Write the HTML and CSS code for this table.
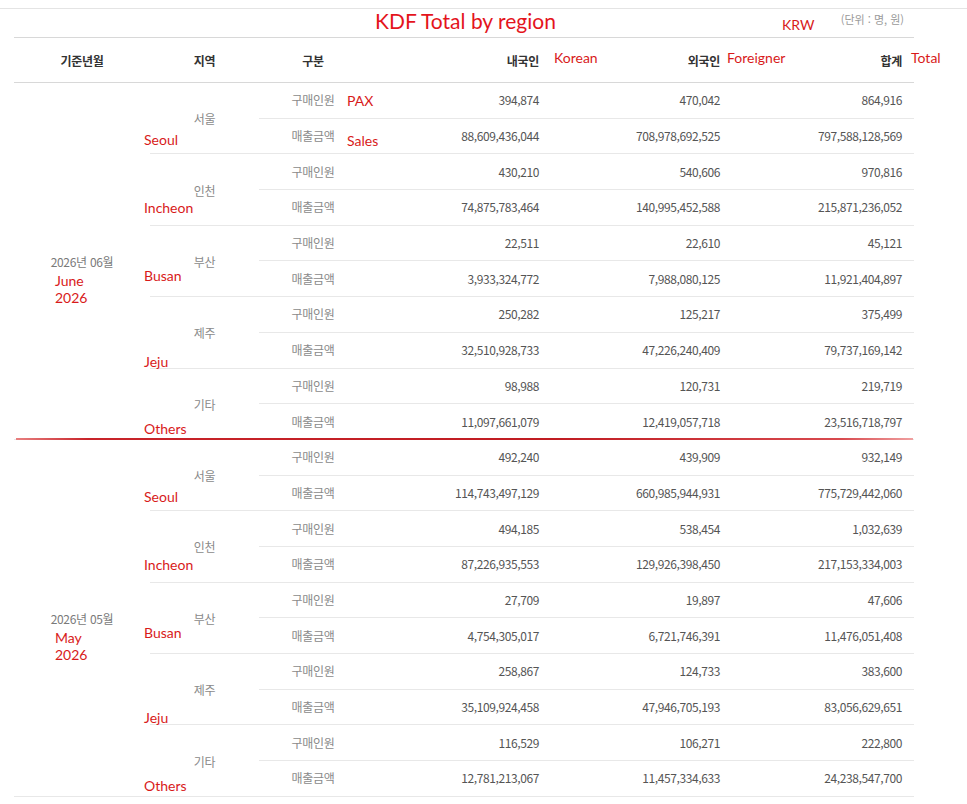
FILE: index.html
```html
<!DOCTYPE html>
<html lang="ko">
<head>
<meta charset="utf-8">
<title>KDF Total by region</title>
<link rel="stylesheet" href="styles.css">
</head>
<body>
<div class="page">
  <div class="topline"></div>
  <div class="caption"><span class="unit">(단위 : 명, 원)</span></div>
  <table class="grid">
    <colgroup>
      <col class="c-month"><col class="c-region"><col class="c-kind"><col class="c-num"><col class="c-num2"><col class="c-num3">
    </colgroup>
    <thead>
      <tr><th>기준년월</th><th>지역</th><th>구분</th><th class="r">내국인</th><th class="r">외국인</th><th class="r">합계</th></tr>
    </thead>
    <tbody class="grp first">
      <tr><td class="month" rowspan="10">2026년 06월</td><td class="region" rowspan="2">서울</td><td class="kind top">구매인원</td><td class="num top">394,874</td><td class="num top">470,042</td><td class="num top">864,916</td></tr>
      <tr><td class="kind">매출금액</td><td class="num">88,609,436,044</td><td class="num">708,978,692,525</td><td class="num">797,588,128,569</td></tr>
      <tr><td class="region" rowspan="2">인천</td><td class="kind top">구매인원</td><td class="num top">430,210</td><td class="num top">540,606</td><td class="num top">970,816</td></tr>
      <tr><td class="kind">매출금액</td><td class="num">74,875,783,464</td><td class="num">140,995,452,588</td><td class="num">215,871,236,052</td></tr>
      <tr><td class="region" rowspan="2">부산</td><td class="kind top">구매인원</td><td class="num top">22,511</td><td class="num top">22,610</td><td class="num top">45,121</td></tr>
      <tr><td class="kind">매출금액</td><td class="num">3,933,324,772</td><td class="num">7,988,080,125</td><td class="num">11,921,404,897</td></tr>
      <tr><td class="region" rowspan="2">제주</td><td class="kind top">구매인원</td><td class="num top">250,282</td><td class="num top">125,217</td><td class="num top">375,499</td></tr>
      <tr><td class="kind">매출금액</td><td class="num">32,510,928,733</td><td class="num">47,226,240,409</td><td class="num">79,737,169,142</td></tr>
      <tr><td class="region" rowspan="2">기타</td><td class="kind top">구매인원</td><td class="num top">98,988</td><td class="num top">120,731</td><td class="num top">219,719</td></tr>
      <tr><td class="kind">매출금액</td><td class="num">11,097,661,079</td><td class="num">12,419,057,718</td><td class="num">23,516,718,797</td></tr>
    </tbody>
    <tbody class="grp">
      <tr><td class="month" rowspan="10">2026년 05월</td><td class="region" rowspan="2">서울</td><td class="kind top">구매인원</td><td class="num top">492,240</td><td class="num top">439,909</td><td class="num top">932,149</td></tr>
      <tr><td class="kind">매출금액</td><td class="num">114,743,497,129</td><td class="num">660,985,944,931</td><td class="num">775,729,442,060</td></tr>
      <tr><td class="region" rowspan="2">인천</td><td class="kind top">구매인원</td><td class="num top">494,185</td><td class="num top">538,454</td><td class="num top">1,032,639</td></tr>
      <tr><td class="kind">매출금액</td><td class="num">87,226,935,553</td><td class="num">129,926,398,450</td><td class="num">217,153,334,003</td></tr>
      <tr><td class="region" rowspan="2">부산</td><td class="kind top">구매인원</td><td class="num top">27,709</td><td class="num top">19,897</td><td class="num top">47,606</td></tr>
      <tr><td class="kind">매출금액</td><td class="num">4,754,305,017</td><td class="num">6,721,746,391</td><td class="num">11,476,051,408</td></tr>
      <tr><td class="region" rowspan="2">제주</td><td class="kind top">구매인원</td><td class="num top">258,867</td><td class="num top">124,733</td><td class="num top">383,600</td></tr>
      <tr><td class="kind">매출금액</td><td class="num">35,109,924,458</td><td class="num">47,946,705,193</td><td class="num">83,056,629,651</td></tr>
      <tr><td class="region" rowspan="2">기타</td><td class="kind top">구매인원</td><td class="num top">116,529</td><td class="num top">106,271</td><td class="num top">222,800</td></tr>
      <tr><td class="kind">매출금액</td><td class="num">12,781,213,067</td><td class="num">11,457,334,633</td><td class="num">24,238,547,700</td></tr>
    </tbody>
  </table>

  <div class="notes">
    <span class="note title">KDF Total by region</span>
    <span class="note n-krw">KRW</span>
    <span class="note n-korean">Korean</span>
    <span class="note n-foreigner">Foreigner</span>
    <span class="note n-total">Total</span>
    <span class="note n-pax">PAX</span>
    <span class="note n-sales">Sales</span>
    <span class="note n-g1-seoul">Seoul</span>
    <span class="note n-g1-incheon">Incheon</span>
    <span class="note n-g1-busan">Busan</span>
    <span class="note n-g1-jeju">Jeju</span>
    <span class="note n-g1-others">Others</span>
    <span class="note n-june">June<br>2026</span>
    <span class="note n-g2-seoul">Seoul</span>
    <span class="note n-g2-incheon">Incheon</span>
    <span class="note n-g2-busan">Busan</span>
    <span class="note n-g2-jeju">Jeju</span>
    <span class="note n-g2-others">Others</span>
    <span class="note n-may">May<br>2026</span>
    <span class="redline"></span>
  </div>
</div>
</body>
</html>
```

FILE: styles.css
```css
html, body {
  margin: 0;
  padding: 0;
  background: #fff;
}
body {
  font-family: "Noto Sans CJK KR", "Noto Sans", sans-serif;
  color: #555;
}
.page {
  position: relative;
  padding-top: 8px;
  width: 967px;
  height: 804px;
  overflow: hidden;
}
.topline {
  border-top: 1px solid #e4e4e4;
}
.caption {
  margin-left: 14px;
  width: 900px;
  height: 28px;
  display: flex;
  justify-content: flex-end;
  align-items: flex-start;
  box-sizing: border-box;
  padding: 2px 10px 0 0;
}
.unit {
  font-size: 11px;
  line-height: 16px;
  color: #9a9a9a;
}
.grid {
  margin-left: 14px;
  width: 900px;
  border-collapse: collapse;
  table-layout: fixed;
}
.c-month { width: 136px; }
.c-region { width: 109px; }
.c-kind { width: 108px; }
.c-num { width: 184px; }
.c-num2 { width: 181px; }
.c-num3 { width: 182px; }
.grid th {
  height: 44px;
  padding: 0 12px;
  border-top: 1px solid #d8d8d8;
  border-bottom: 1px solid #d8d8d8;
  font-size: 12px;
  font-weight: bold;
  color: #333;
  text-align: center;
  letter-spacing: -0.3px;
}
.grid th.r { text-align: right; }
.grid td {
  height: 34.7px;
  padding: 0 12px;
  font-size: 12px;
  line-height: 16px;
  border-bottom: 1px solid #e8e8e8;
  text-align: center;
  color: #555;
  letter-spacing: -0.3px;
}
.grid td.num {
  text-align: right;
  letter-spacing: -0.4px;
}
.grid td.kind,
.grid td.region {
  color: #8a8a8a;
}
.grid td.region {
  padding-top: 2px;
}
.grid td.month {
  color: #7a7a7a;
  padding-top: 2px;
}

.notes {
  position: absolute;
  left: 0;
  top: 0;
  width: 967px;
  height: 804px;
  pointer-events: none;
}
.note {
  position: absolute;
  font-family: Lato, "Noto Sans", sans-serif;
  font-size: 14px;
  line-height: 17px;
  color: #d81a1a;
  white-space: nowrap;
}
.note.title {
  left: 375px;
  top: 9px;
  font-size: 21px;
  line-height: 24px;
  color: #e4141c;
}
.n-krw { left: 782px; top: 16px; }
.n-korean { left: 554px; top: 49px; }
.n-foreigner { left: 727px; top: 49px; }
.n-total { left: 911px; top: 49px; }
.n-pax { left: 347px; top: 92px; }
.n-sales { left: 347px; top: 132px; }
.n-g1-seoul { left: 144px; top: 131px; }
.n-g1-incheon { left: 144px; top: 199px; }
.n-g1-busan { left: 144px; top: 267px; }
.n-g1-jeju { left: 144px; top: 353px; }
.n-g1-others { left: 144px; top: 420px; }
.n-june { left: 55px; top: 272px; }
.n-g2-seoul { left: 144px; top: 488px; }
.n-g2-incheon { left: 144px; top: 556px; }
.n-g2-busan { left: 144px; top: 624px; }
.n-g2-jeju { left: 144px; top: 709px; }
.n-g2-others { left: 144px; top: 777px; }
.n-may { left: 55px; top: 629px; }
.redline {
  position: absolute;
  left: 16px;
  top: 438px;
  width: 897px;
  height: 2px;
  background: linear-gradient(to right, #e88080, #c8242a 8%, #c01c22 60%, #d84a4f 92%, #f0a0a0);
}
```
